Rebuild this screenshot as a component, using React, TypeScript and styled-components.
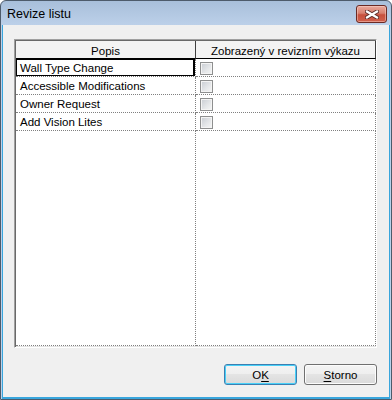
import React from 'react';
import styled, { createGlobalStyle } from 'styled-components';

const GlobalStyle = createGlobalStyle`
  html, body {
    margin: 0;
    padding: 0;
    background: #ffffff;
  }
  * {
    box-sizing: border-box;
  }
`;

const rows = [
  { name: 'Wall Type Change', shown: false },
  { name: 'Accessible Modifications', shown: false },
  { name: 'Owner Request', shown: false },
  { name: 'Add Vision Lites', shown: false },
];

const App = () => {
  return (
    <>
      <GlobalStyle />
      <Window>
        <TitleBar>
          <Title>Revize listu</Title>
          <CloseBtn>
            <svg width="14" height="9" viewBox="0 0 14 9">
              <path d="M2 1.5 L12 7.5 M12 1.5 L2 7.5" stroke="#5a2a26" strokeWidth="4" strokeLinecap="square" />
              <path d="M2 1.5 L12 7.5 M12 1.5 L2 7.5" stroke="#ffffff" strokeWidth="2.2" strokeLinecap="square" />
            </svg>
          </CloseBtn>
        </TitleBar>
        <Client>
          <Grid>
            <Table>
              <HeaderCell>Popis</HeaderCell>
              <HeaderCell>Zobrazený v revizním výkazu</HeaderCell>
              {rows.map((row, i) => (
                <React.Fragment key={row.name}>
                  <TextCell $selected={i === 0}>{row.name}</TextCell>
                  <CheckCell>
                    <CheckBox $checked={row.shown} />
                  </CheckCell>
                </React.Fragment>
              ))}
              <FillCell />
              <FillCell />
            </Table>
          </Grid>
          <ButtonRow>
            <Button $default>
              O<u>K</u>
            </Button>
            <Button>
              <u>S</u>torno
            </Button>
          </ButtonRow>
        </Client>
      </Window>
    </>
  );
};

export default App;

const Window = styled.div`
  width: 392px;
  height: 400px;
  display: flex;
  flex-direction: column;
  border: 1px solid #4d5b6b;
  border-radius: 6px 6px 0 0;
  background: linear-gradient(#a8bfda 0px, #bcd0e9 24px, #b9d1ea 100%);
  font-family: 'Liberation Sans', Arial, sans-serif;
  color: #000;
`;

const TitleBar = styled.div`
  height: 24px;
  flex: none;
  display: flex;
  align-items: center;
  justify-content: space-between;
  padding: 0 4px 0 6px;
`;

const Title = styled.span`
  font-size: 12.5px;
  margin-top: 1px;
`;

const CloseBtn = styled.div`
  width: 31px;
  height: 18px;
  margin-top: 2px;
  display: flex;
  align-items: center;
  justify-content: center;
  border: 1px solid #6b2a24;
  border-radius: 3px;
  background: linear-gradient(#eaa99c 0%, #d8806f 45%, #c7503d 55%, #d0604c 100%);
  box-shadow: inset 0 0 0 1px rgba(255, 220, 210, 0.45);
`;

const Client = styled.div`
  flex: 1;
  display: flex;
  flex-direction: column;
  margin: 0 1px 0 1px;
  border: 1px solid #39a6dd;
  border-top: none;
  border-bottom-width: 2px;
  background: #f0f0f0;
  padding: 14px 12px 12px 11px;
`;

const Grid = styled.div`
  flex: 1;
  display: flex;
  padding: 1px;
  border-top: 1px solid #a0a0a0;
  border-left: 1px solid #a0a0a0;
  border-right: 1px solid #ffffff;
  border-bottom: 1px solid #ffffff;
  box-shadow: inset 1px 1px 0 #696969, inset -1px -1px 0 #e3e3e3;
  background: #ffffff;
`;

const Table = styled.div`
  flex: 1;
  display: grid;
  grid-template-columns: 180px 180px;
  grid-template-rows: 18px repeat(4, 18px) 1fr;
  background: #ffffff;
  font-size: 11.5px;
`;

const HeaderCell = styled.div`
  display: flex;
  align-items: center;
  justify-content: center;
  background: #f3f3f3;
  border-right: 1px solid #404040;
  border-bottom: 1px solid #000000;
  padding-top: 2px;
`;

const TextCell = styled.div<{ $selected?: boolean }>`
  display: flex;
  align-items: center;
  padding-left: 4px;
  white-space: nowrap;
  border-right: 1px dotted #808080;
  border-bottom: 1px dotted #808080;
  box-shadow: ${(p) => (p.$selected ? 'inset 0 0 0 1px #000, inset -1px 0 0 1px #000' : 'none')};
`;

const CheckCell = styled.div`
  display: flex;
  align-items: center;
  padding-left: 4px;
  border-right: 1px dotted #808080;
  border-bottom: 1px dotted #808080;
`;

const CheckBox = styled.span<{ $checked?: boolean }>`
  width: 13px;
  height: 13px;
  margin-top: 1px;
  border: 1px solid #8e8f8f;
  background: linear-gradient(135deg, #c8ccd2 0%, #e6e8ea 60%, #f6f6f6 100%);
  box-shadow: inset 0 0 0 1px #f4f4f4;
`;

const FillCell = styled.div`
  border-right: 1px dotted #808080;
  border-bottom: 1px dotted #808080;
`;

const ButtonRow = styled.div`
  flex: none;
  display: flex;
  justify-content: flex-end;
  gap: 7px;
  margin-top: 16px;
`;

const Button = styled.div<{ $default?: boolean }>`
  width: 73px;
  height: 21px;
  display: flex;
  align-items: center;
  justify-content: center;
  font-size: 11.5px;
  border-radius: 3px;
  border: 1px solid ${(p) => (p.$default ? '#3c7fb1' : '#707070')};
  background: linear-gradient(#f4f4f4 0%, #eeeeee 50%, #e4e4e4 50%, #dadada 100%);
  box-shadow: ${(p) => (p.$default ? 'inset 0 0 0 1px #48d0f8' : 'inset 0 0 0 1px #fcfcfc')};

  u {
    text-decoration: underline;
    text-underline-offset: 2px;
  }
`;
